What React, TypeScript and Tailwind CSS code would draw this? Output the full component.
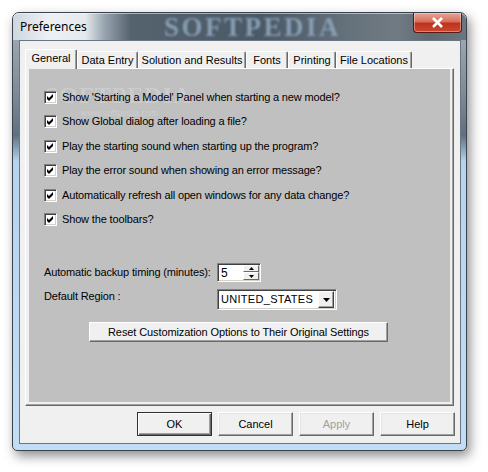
import React from "react";

const font = { fontFamily: '"Liberation Sans", Arial, sans-serif' };

function Check() {
  return (
    <div className="relative w-[13px] h-[13px] shrink-0 bg-white border border-t-[#808080] border-l-[#808080] border-r-white border-b-white shadow-[inset_1px_1px_0_#404040,inset_-1px_-1px_0_#d4d0c8]">
      <svg width="11" height="11" viewBox="0 0 11 11" className="absolute left-0 top-0">
        <path d="M2 4 L4 6 L8 2 L8 5 L4 9 L2 7 Z" fill="#000" />
      </svg>
    </div>
  );
}

function CheckRow({ label, mt }: { label: string; mt: string }) {
  return (
    <div className={`relative z-10 flex items-center h-[13px] gap-[5px] ${mt}`}>
      <Check />
      <span className="text-[11px] leading-none text-black whitespace-nowrap tracking-[-0.15px]">{label}</span>
    </div>
  );
}

function Btn({ label, def, disabled }: { label: string; def?: boolean; disabled?: boolean }) {
  return (
    <div
      className={`w-[75px] h-[24px] flex items-center justify-center text-[11px] bg-[#f0f0f0] ${
        def
          ? "border border-[#303030] shadow-[inset_1px_1px_0_#ffffff,inset_-1px_-1px_0_#696969,inset_-2px_-2px_0_#a0a0a0]"
          : "border border-t-white border-l-white border-r-[#696969] border-b-[#696969] shadow-[inset_-1px_-1px_0_#a0a0a0,inset_1px_1px_0_#e3e3e3]"
      } ${disabled ? "text-[#a0a0a0]" : "text-black"}`}
    >
      {label}
    </div>
  );
}

function Tab({ label, w, selected }: { label: string; w: string; selected?: boolean }) {
  return (
    <div
      className={`${w} flex items-center justify-center text-[11px] text-black bg-[#f0f0f0] rounded-t-[2px] border-l border-t border-l-white border-t-white border-r border-r-[#696969] shadow-[inset_-1px_0_0_#a0a0a0] ${
        selected ? "h-[20px] relative z-10 -mb-px pb-[2px]" : "h-[17px]"
      }`}
    >
      {label}
    </div>
  );
}

export default function App() {
  return (
    <div className="w-[488px] h-[472px] bg-white overflow-hidden relative" style={font}>
      <div className="relative ml-[12px] mt-[12px] w-[455px] h-[439px] rounded-t-[7px] rounded-b-[5px] border border-[#3a434c] bg-[linear-gradient(to_bottom,#a9b4be_0%,#7d8c99_18%,#5f7080_28%,#b6d3ef_34%,#c3ddf5_100%)] shadow-[3px_5px_12px_rgba(0,0,0,0.45)] flex flex-col">
        {/* title bar */}
        <div className="relative h-[27px] shrink-0 rounded-t-[6px] overflow-hidden bg-[linear-gradient(to_right,#cdd6de_0%,#eef1f4_8%,#e4e9ed_16%,#9aa7b2_20%,#55636f_26%,#4b5966_55%,#66727c_75%,#717b83_85%,#5e6870_92%,#6c767e_100%)] shadow-[inset_0_1px_0_rgba(255,255,255,0.5)]">
          <div className="absolute left-[151px] top-[2px] text-[27px] leading-[24px] font-bold tracking-[2.5px] text-[#8ca4bb] blur-[1.2px] opacity-90" style={{ fontFamily: '"Liberation Serif", serif' }}>
            SOFTPEDIA
          </div>
          <div className="absolute left-[7px] top-[6px] text-[12px] leading-[15px] text-black" style={{ fontFamily: '"Noto Sans", "Open Sans", sans-serif' }}>
            Preferences
          </div>
          <div className="absolute right-[4px] top-0 w-[49px] h-[20px] rounded-b-[4px] border border-t-0 border-[#5a1a12] bg-[linear-gradient(to_bottom,#e8a596_0%,#d6705c_45%,#c0321c_55%,#c84a30_100%)] shadow-[inset_0_0_0_1px_rgba(255,255,255,0.35)] flex items-center justify-center">
            <svg width="13" height="11" viewBox="0 0 13 11">
              <path d="M2 1 L11 10 M11 1 L2 10" stroke="#ffffff" strokeWidth="2.6" />
            </svg>
          </div>
        </div>

        {/* client area */}
        <div className="ml-[6px] w-[442px] h-[404px] border border-[#6a7682] bg-[#f0f0f0] flex flex-col">
          {/* tabs */}
          <div className="flex items-end h-[20px] mt-[7px] ml-[5px]">
            <Tab label="General" w="w-[52px]" selected />
            <Tab label="Data Entry" w="w-[61px]" />
            <Tab label="Solution and Results" w="w-[108px]" />
            <Tab label="Fonts" w="w-[42px]" />
            <Tab label="Printing" w="w-[48px]" />
            <Tab label="File Locations" w="w-[76px]" />
          </div>
          {/* panel */}
          <div className="ml-[5px] w-[429px] h-[338px] border border-t-white border-l-white border-r-[#696969] border-b-[#696969] shadow-[inset_-1px_-1px_0_#a0a0a0] pl-[3px] pr-[3px] pt-0 pb-[3px] flex">
            <div className="relative flex-1 bg-[#c0c0c0] pl-[15px] pt-[22px] flex flex-col">
              <div className="absolute left-[16px] top-[14px] text-[24px] leading-none font-bold tracking-[1px] text-white/20 blur-[0.6px]" style={{ fontFamily: '"Liberation Serif", serif' }}>
                SOFTPEDIA
              </div>
              <div className="absolute left-[52px] top-[40px] text-[9px] leading-none text-white/25">www.softpedia.com</div>
              <CheckRow label="Show 'Starting a Model' Panel when starting a new model?" mt="mt-0" />
              <CheckRow label="Show Global dialog after loading a file?" mt="mt-[11px]" />
              <CheckRow label="Play the starting sound when starting up the program?" mt="mt-[12px]" />
              <CheckRow label="Play the error sound when showing an error message?" mt="mt-[11px]" />
              <CheckRow label="Automatically refresh all open windows for any data change?" mt="mt-[12px]" />
              <CheckRow label="Show the toolbars?" mt="mt-[11px]" />

              {/* spin row */}
              <div className="flex items-center mt-[37px] h-[19px]">
                <span className="w-[173px] text-[11px] text-black tracking-[-0.15px]">Automatic backup timing (minutes):</span>
                <div className="w-[44px] h-[19px] bg-white border border-t-[#808080] border-l-[#808080] border-r-white border-b-white shadow-[inset_1px_1px_0_#404040,inset_-1px_-1px_0_#d4d0c8] flex items-center pl-[3px] pr-[1px]">
                  <span className="flex-1 text-[12px] text-black leading-none">5</span>
                  <div className="w-[16px] h-[15px] flex flex-col">
                    <div className="h-[7px] bg-[#f0f0f0] border border-t-white border-l-white border-r-[#696969] border-b-[#696969] flex items-center justify-center">
                      <svg width="5" height="3" viewBox="0 0 5 3"><path d="M2.5 0 L5 3 L0 3 Z" fill="#000" /></svg>
                    </div>
                    <div className="h-[8px] bg-[#f0f0f0] border border-t-white border-l-white border-r-[#696969] border-b-[#696969] flex items-center justify-center">
                      <svg width="5" height="3" viewBox="0 0 5 3"><path d="M0 0 L5 0 L2.5 3 Z" fill="#000" /></svg>
                    </div>
                  </div>
                </div>
              </div>

              {/* combo row */}
              <div className="flex items-start mt-[7px] h-[21px]">
                <span className="w-[173px] text-[11px] text-black leading-[14px] tracking-[-0.15px]">Default Region :</span>
                <div className="w-[120px] h-[21px] bg-white border border-t-[#808080] border-l-[#808080] border-r-white border-b-white shadow-[inset_1px_1px_0_#404040,inset_-1px_-1px_0_#d4d0c8] flex items-center pl-[3px] pr-[2px]">
                  <span className="flex-1 text-[11px] text-black tracking-[0.3px]">UNITED_STATES</span>
                  <div className="w-[16px] h-[17px] bg-[#f0f0f0] border border-t-white border-l-white border-r-[#404040] border-b-[#404040] shadow-[inset_-1px_-1px_0_#a0a0a0] flex items-center justify-center">
                    <svg width="7" height="4" viewBox="0 0 7 4"><path d="M0 0 L7 0 L3.5 4 Z" fill="#000" /></svg>
                  </div>
                </div>
              </div>

              {/* reset */}
              <div className="mt-[12px] ml-[45px] w-[299px] h-[20px] bg-[#f0f0f0] border border-t-white border-l-white border-r-[#696969] border-b-[#696969] shadow-[inset_-1px_-1px_0_#a0a0a0] flex items-center justify-center text-[11px] text-black tracking-[-0.1px]">
                Reset Customization Options to Their Original Settings
              </div>
            </div>
          </div>
          {/* buttons */}
          <div className="flex justify-end gap-[6px] mt-[6px] mr-[5px]">
            <Btn label="OK" def />
            <Btn label="Cancel" />
            <Btn label="Apply" disabled />
            <Btn label="Help" />
          </div>
        </div>
      </div>
    </div>
  );
}
